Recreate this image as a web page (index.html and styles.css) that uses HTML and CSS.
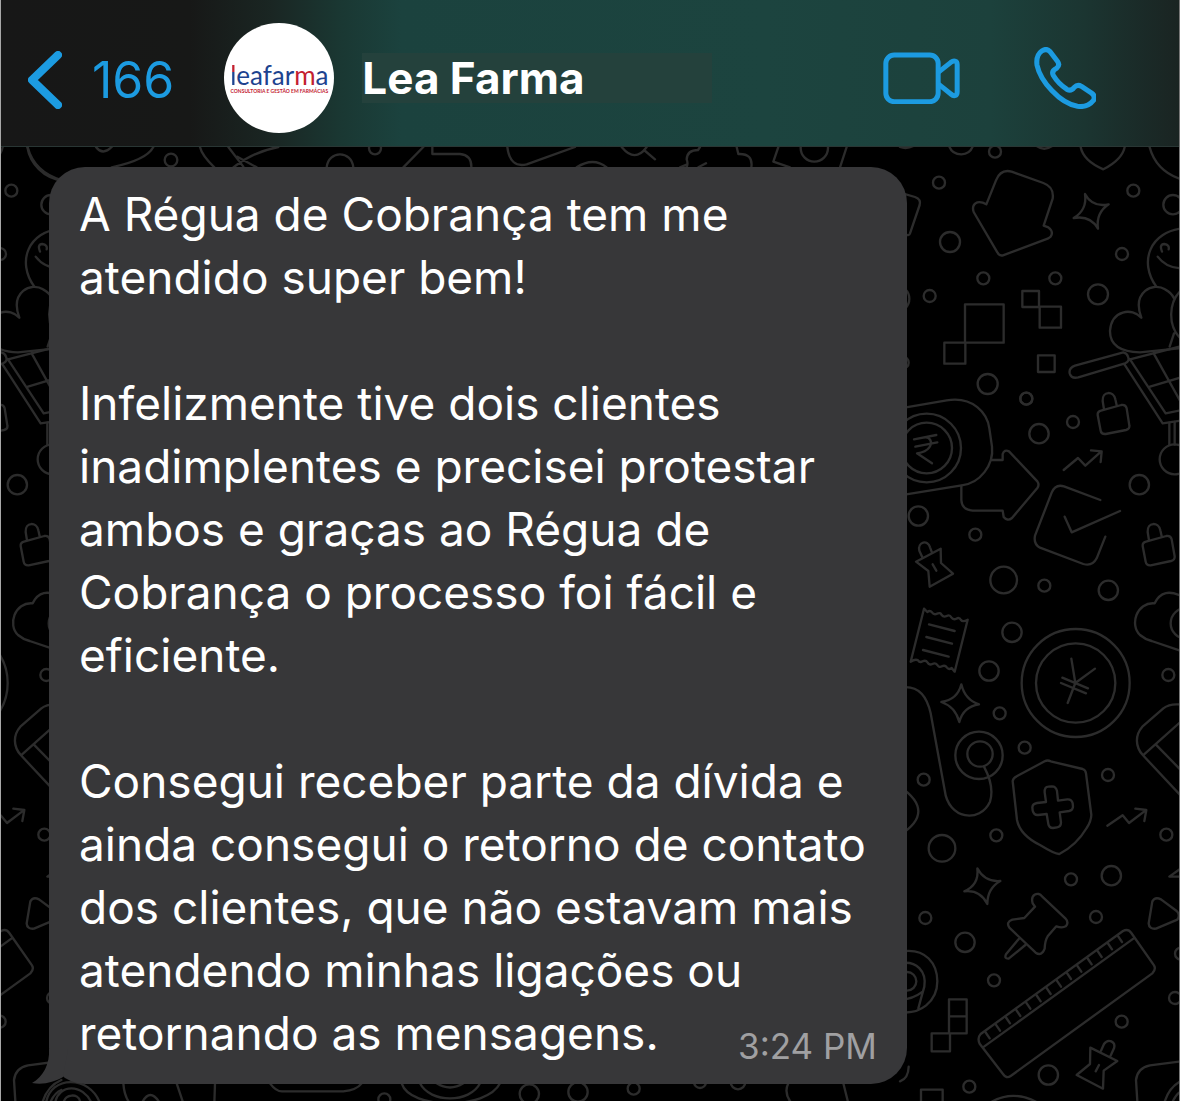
FILE: index.html
```html
<!DOCTYPE html>
<html lang="pt-BR">
<head>
<meta charset="UTF-8">
<meta name="viewport" content="width=device-width, initial-scale=1.0">
<title>Lea Farma</title>
<link rel="stylesheet" href="styles.css">
</head>
<body>
<header class="topbar">
    <button class="back" type="button">
        <svg class="chevron" viewBox="0 0 34 58" aria-hidden="true"><path d="M30 4 L4 29 L30 54"/></svg>
        <span>166</span>
    </button>
    <div class="avatar">
        <span class="logo"><b>l</b>eafar<i>m</i>a</span>
        <span class="tagline">CONSULTORIA E GESTÃO EM FARMÁCIAS</span>
    </div>
    <h1 class="name">Lea Farma</h1>
    <div class="actions">
        <button type="button" aria-label="Chamada de vídeo">
            <svg class="video" viewBox="190 152 230 156" aria-hidden="true">
                <rect x="198" y="161" width="157" height="140" rx="25"/>
                <path d="M358 211 L393 183 Q401 177 407 180 Q412 182 412 190 V271 Q412 280 407 282 Q401 285 393 278 L358 250"/>
            </svg>
        </button>
        <button type="button" aria-label="Chamada de voz">
            <svg class="phone" viewBox="644 139 184 184" aria-hidden="true">
                <path d="M667 151 Q681 141 692 153 L714 182 Q722 193 711 202 Q695 210 701 223 Q716 248 742 265 Q754 271 763 259 Q773 249 785 256 L814 275 Q828 285 820 298 Q804 319 773 315 C720 306 663 240 653 193 Q649 164 667 151Z"/>
            </svg>
        </button>
    </div>
</header>

<main class="chat">
    <svg class="wallpaper" viewBox="0 441 3540 2862" preserveAspectRatio="xMidYMin slice" aria-hidden="true">
        <g id="tile">
            <!-- house, star, smiley, heart, cart -->
            <g transform="translate(2700 420)">
                <path d="M146 14 Q154 43 184 43 Q212 42 220 14 M405 14 Q432 38 462 14 M0 21 Q20 28 40 18"/>
                <circle cx="285" cy="35" r="18"/>
                <path d="M541 14 Q545 60 610 88 Q672 56 675 14 M747 14 Q765 95 850 120"/>
                <circle cx="117" cy="128" r="18"/>
                <circle cx="700" cy="152" r="18"/>
                <circle cx="819" cy="194" r="29"/>
                <circle cx="150" cy="306" r="30"/>
                <circle cx="666" cy="342" r="18"/>
                <circle cx="250" cy="415" r="18"/>
                <circle cx="466" cy="415" r="18"/>
                <circle cx="89" cy="468" r="18"/>
                <circle cx="594" cy="463" r="30"/>
                <circle cx="263" cy="732" r="30"/>
                <circle cx="379" cy="776" r="18"/>
                <path d="M10 161 L45 171 Q64 178 59 195 L30 280 Q27 288 18 284"/>
                <path d="M288 121 Q302 86 335 95 L430 129 Q463 141 458 176 L431 257 L445 262 Q462 275 452 290 L445 295 L309 346 Q298 349 292 337 L221 216 Q214 194 232 187 Q244 184 259 193Z"/>
                <path d="M555 162 Q577 203 626 193 Q587 219 594 266 Q571 225 521 234 Q562 210 555 162Z"/>
                <path d="M850 265 C750 275 715 365 769 440 M786 335 Q777 313 793 312 Q809 314 806 328 M773 350 Q800 386 850 385"/>
                <path d="M724 533 C695 455 760 425 795 448 Q815 458 822 475 M724 533 C696 502 635 510 630 572 C629 625 680 636 720 637 L836 625 M850 445 C805 480 798 560 850 603 M822 580 L809 620"/>
                <path d="M195 493 h116 v115 h-116z M133 608 h63 v63 h-63z M367 453 h50 v48 h-50z M419 500 h64 v63 h-64z M414 646 h50 v50 h-50z"/>
                <path d="M670 637 L525 677 Q506 684 509 700 Q514 717 535 712 L675 670 Q690 665 684 650 Q681 640 670 637 M690 658 L850 617 M672 671 L788 850 L870 838 M690 658 L797 820 L870 805 M761 640 L850 800 M750 740 L850 710"/>
                <path d="M808 848 V914 M824 846 V914"/>
                <circle cx="824" cy="958" r="45"/>
                <circle cx="-12" cy="476" r="40"/>
                <circle cx="8" cy="668" r="18"/>
            </g>
            <!-- rupee coin, arrow, checkbox, locks -->
            <g transform="translate(2700 1140)">
                <circle cx="379" cy="56" r="18"/>
                <circle cx="519" cy="126" r="18"/>
                <circle cx="417" cy="161" r="29"/>
                <circle cx="718" cy="314" r="29"/>
                <circle cx="55" cy="408" r="29"/>
                <circle cx="226" cy="464" r="18"/>
                <circle cx="311" cy="600" r="40"/>
                <circle cx="433" cy="617" r="18"/>
                <circle cx="625" cy="631" r="29"/>
                <path d="M0 85 L140 61 C220 48 262 100 268 145 L276 200 C282 255 240 310 185 316 L0 346"/>
                <circle cx="80" cy="204" r="76"/>
                <circle cx="80" cy="204" r="103"/>
                <path d="M42 178 L109 165 M46 200 L112 187 M70 173 C92 168 98 188 88 202 Q78 216 51 220 L96 250"/>
                <path d="M274 240 H308 V222 Q313 207 327 214 L412 304 Q419 314 412 324 L336 414 Q322 425 311 411 L308 392 H218 Q185 389 184 360 V318"/>
                <path d="M491 270 L534 234 L556 257 L603 215 M573 211 L605 214 L602 246"/>
                <path d="M601 360 L492 319 Q466 311 455 338 L405 467 Q400 492 420 503 L550 552 Q577 560 590 535 L616 470 M494 410 L515 457 L660 393"/>
                <path d="M603 92 L664 75 Q677 73 680 85 L688 136 Q690 147 678 150 L617 162 Q604 163 602 152 L593 105 Q592 95 603 92 M612 88 L608 63 C606 32 641 32 646 58 L650 76"/>
                <path d="M738 485 L799 468 Q812 466 815 478 L824 529 Q825 540 813 543 L752 556 Q739 557 737 545 L728 498 Q727 488 738 485 M747 481 L743 456 C741 425 776 425 781 451 L785 469"/>
                <path d="M48 545 L122 506 L123 549 L159 581 L89 620 L85 573Z M67 532 L58 512 C52 485 84 478 90 502 L96 518 M98 553 L109 572"/>
                <path d="M850 651 Q788 618 764 670 C710 665 688 735 720 765 Q735 778 755 783 L850 815"/>
            </g>
            <!-- receipt, yen coin, shield, cable -->
            <g transform="translate(2700 1770)">
                <circle cx="336" cy="127" r="29"/>
                <circle cx="267" cy="243" r="29"/>
                <circle cx="805" cy="255" r="18"/>
                <circle cx="299" cy="370" r="18"/>
                <circle cx="374" cy="473" r="18"/>
                <circle cx="624" cy="555" r="18"/>
                <circle cx="71" cy="569" r="18"/>
                <circle cx="289" cy="736" r="18"/>
                <circle cx="799" cy="734" r="18"/>
                <circle cx="126" cy="775" r="40"/>
                <path d="M72 56 l10 10 q8 -6 14 1 q6 9 15 4 q10 -5 14 4 q6 8 15 3 q9 -5 14 4 q6 9 15 4 q9 -5 14 4 q5 7 20 -1 L164 245 l-9 -11 q-9 6 -14 -1 q-6 -9 -15 -4 q-9 5 -14 -4 q-6 -8 -15 -3 q-9 5 -14 -4 q-6 -9 -15 -4 q-9 5 -14 -3 q-8 -5 -22 4Z M87 103 L164 123 M79 141 L156 161 M69 180 L146 200"/>
                <circle cx="527" cy="279" r="162"/>
                <circle cx="527" cy="279" r="119"/>
                <path d="M514 206 L526 279 L585 236 M526 279 L503 339 M487 263 L564 295 M483 279 L558 310"/>
                <path d="M184 283 Q195 330 237 343 Q190 350 178 396 Q166 350 124 336 Q172 330 184 283Z"/>
                <circle cx="240" cy="492" r="38"/>
                <circle cx="237" cy="496" r="71"/>
                <path d="M0 293 Q72 280 92 370 L134 600 C145 690 240 700 270 635 Q284 590 252 530"/>
                <path d="M0 590 Q110 665 0 735"/>
                <path d="M434 514 Q443 509 452 514 L548 537 Q557 540 558 550 L574 675 Q573 695 560 714 Q530 765 478 792 Q466 793 420 765 Q360 735 351 690 L338 573 Q340 563 350 559Z"/>
                <path d="M434 607 Q433 590 445 590 L456 589 Q468 589 471 603 L474 632 L502 628 Q515 627 518 640 L519 649 Q519 661 507 663 L479 667 L483 697 Q483 711 471 712 L459 714 Q447 714 445 702 L440 672 L414 675 Q402 676 398 662 L397 652 Q398 641 411 639 L438 636Z"/>
                <path d="M622 707 L668 676 L687 699 L737 661 M706 656 L739 660 L733 693"/>
                <path d="M850 345 Q812 338 790 355 L727 410 C705 435 705 470 729 496 L850 625 M729 496 L850 388 M767 463 L850 548"/>
                <circle cx="858" cy="100" r="46"/>
            </g>
            <!-- pins, ruler, squares -->
            <g transform="translate(2700 2520)">
                <circle cx="513" cy="118" r="18"/>
                <circle cx="634" cy="107" r="29"/>
                <circle cx="76" cy="234" r="18"/>
                <circle cx="588" cy="231" r="18"/>
                <circle cx="195" cy="307" r="29"/>
                <circle cx="282" cy="421" r="18"/>
                <circle cx="843" cy="341" r="18"/>
                <circle cx="825" cy="474" r="18"/>
                <circle cx="665" cy="545" r="18"/>
                <circle cx="445" cy="705" r="29"/>
                <circle cx="208" cy="740" r="18"/>
                <path d="M232 85 Q254 127 301 123 Q262 145 262 192 Q240 148 193 154 Q238 134 232 85Z"/>
                <path d="M398 190 C390 162 415 154 426 169 L496 235 Q508 248 497 259 Q487 265 469 259 L443 289 Q435 301 434 326 Q425 350 407 338 L328 263 Q317 246 337 239 L373 234 L405 200Z M357 296 L318 343 Q312 357 326 356 L376 315"/>
                <path d="M242 582 L669 273 Q684 265 694 279 L762 376 Q769 388 757 400 L332 708 Q319 717 309 702 L239 611 Q231 594 242 582Z M252 620 L700 296"/>
                <path d="M256 576 l13 19 M287 553 l13 19 M317 531 l13 19 M348 509 l13 19 M378 487 l13 19 M409 465 l13 19 M439 443 l13 19 M470 421 l13 19 M500 398 l13 19 M531 376 l13 19 M562 354 l13 19 M592 332 l13 19 M623 309 l13 19 M653 287 l13 19"/>
                <path d="M757 184 Q765 169 783 178 L830 213 Q842 225 832 239 L768 266 Q747 268 746 250Z M850 80 L808 110 H850"/>
                <path d="M147 478 h53 v102 h-53z M147 529 h53 M95 580 h55 v54 h-55z M63 800 v-51 h65 v51"/>
                <circle cx="21" cy="424" r="28"/>
                <path d="M0 370 C50 360 80 395 73 440 Q63 475 55 505 M0 480 Q38 478 68 455 M0 335 C80 320 112 375 112 424 C112 485 60 525 0 516"/>
                <path d="M0 724 Q25 715 26 680 M275 785 Q340 750 408 785"/>
                <path d="M571 623 L652 663 L611 692 L609 746 L530 705 L570 672Z M603 632 L612 612 C625 594 648 605 642 625 L631 649 M597 675 L587 694"/>
                <path d="M850 663 L750 676 Q712 684 708 720 L713 800 M790 800 Q803 740 850 720 M812 800 Q825 760 850 750"/>
            </g>
        </g>
        <use href="#tile" x="-3366"/>
        <!-- strip above the bubble -->
        <path d="M82 441 C90 490 130 535 190 542 M288 441 Q308 468 335 441 M460 441 Q440 480 335 502 M600 441 Q605 465 643 502 M685 441 L730 500 M835 441 Q760 455 700 502 M712 470 L770 502"/>
        <circle cx="513" cy="480" r="19"/>
        <circle cx="1125" cy="445" r="18"/>
        <path d="M980 502 C985 450 1055 450 1060 502 M1270 441 L1210 502 M1297 441 V462 H1380 Q1415 465 1414 502 M1522 441 Q1530 505 1580 493 L1725 441 M1730 502 Q1780 470 1820 502 M1865 441 Q1905 490 1940 441 M1932 450 L1965 478 M2100 441 L2094 450 Q2062 450 2060 478 Q2065 490 2060 502 M2040 502 L2060 494 M2095 502 L2118 490 M2210 441 L2215 462 Q2260 460 2254 502 M2335 441 L2320 485 L2370 502 M2540 441 L2520 502"/>
        <circle cx="2443" cy="444" r="41"/>
        <!-- strip under the bubble -->
        <path d="M370 3250 Q373 3290 390 3310 M425 3310 Q450 3260 480 3310 M530 3250 L550 3310 M645 3250 L643 3310 M810 3250 Q830 3277 850 3274 H1030 Q1070 3270 1085 3250 M1205 3250 C1230 3330 1460 3330 1500 3250 M1260 3250 C1290 3310 1410 3310 1440 3250 M1310 3250 Q1350 3275 1390 3250 M2365 3250 Q2350 3280 2375 3310 M2530 3250 L2545 3310"/>
        <path d="M138 3310 C150 3225 270 3225 300 3310 M165 3310 C175 3250 250 3250 275 3310 M190 3310 C195 3280 235 3280 240 3303"/>
        <circle cx="1153" cy="3298" r="18"/>
        <circle cx="1588" cy="3282" r="29"/>
        <circle cx="1734" cy="3276" r="29"/>
        <circle cx="1901" cy="3266" r="18"/>
        <circle cx="2100" cy="3246" r="18"/>
        <circle cx="2214" cy="3246" r="22"/>
    </svg>

    <article class="bubble">
        <p>A Régua de Cobrança tem me atendido super bem!</p>
        <p>Infelizmente tive dois clientes inadimplentes e precisei protestar ambos e graças ao Régua de Cobrança o processo foi fácil e eficiente.</p>
        <p>Consegui receber parte da dívida e ainda consegui o retorno de contato dos clientes, que não estavam mais atendendo minhas ligações ou retornando as mensagens. <time class="time" datetime="15:24">3:24 PM</time></p>
        <svg class="tail" viewBox="0 0 36 36" aria-hidden="true"><path d="M17 0 C18 15 11 28 0 34 C12 36 22 33 31 28 L36 0Z"/></svg>
    </article>
</main>
</body>
</html>
```
FILE: styles.css
```css
* {
    box-sizing: border-box;
}

body {
    margin: 0;
    min-height: 100vh;
    display: flex;
    flex-direction: column;
    font-family: Inter, "Liberation Sans", sans-serif;
    color: #fff;
    background-color: #000;
    border-left: 1px solid #a8a8a8;
    border-right: 1px solid #777;
}

button {
    display: flex;
    align-items: center;
    padding: 0;
    border: 0;
    background: none;
    color: #1c9be1;
    font: inherit;
    cursor: pointer;
}

svg {
    display: block;
    fill: none;
    stroke: #1c9be1;
    stroke-linecap: round;
    stroke-linejoin: round;
}

.topbar {
    display: flex;
    align-items: center;
    padding: 23px 83px 13px 27px;
    background: linear-gradient(90deg, #171717 0%, #171817 16%, #1a2623 23%, #1a3833 29%, #1b423e 34%, #1c443f 65%, #1c413c 84%, #1b3531 92%, #1a2422 100%);
    border-bottom: 1px solid #293634;
}

.topbar .back {
    gap: 30px;
    padding-top: 3px;
    font-size: 50px;
    line-height: 60px;
}

.chevron {
    width: 34px;
    height: 58px;
    stroke-width: 8;
}

.avatar {
    display: flex;
    flex-direction: column;
    align-items: center;
    justify-content: center;
    width: 110px;
    height: 110px;
    margin-left: 50px;
    border-radius: 50%;
    background-color: #fff;
    white-space: nowrap;
}

.logo {
    font-family: Lato, sans-serif;
    font-size: 26px;
    line-height: 26px;
    color: #1d438f;
}

.logo b {
    font-weight: normal;
    color: transparent;
    background: linear-gradient(#c3202f 40%, #1d438f 40%);
    -webkit-background-clip: text;
    background-clip: text;
}

.logo i {
    font-style: normal;
    color: #c3202f;
}

.tagline {
    font-family: Lato, sans-serif;
    font-size: 5px;
    font-weight: bold;
    line-height: 6px;
    color: #c3202f;
}

.name {
    width: 350px;
    margin: 0 0 0 28px;
    background-color: #24413c;
    font-size: 44px;
    font-weight: 700;
    line-height: 50px;
}

.actions {
    display: flex;
    gap: 74px;
    margin-left: auto;
}

.video {
    width: 77px;
    height: 52px;
    stroke-width: 15;
}

.phone {
    width: 62px;
    height: 62px;
    stroke-width: 15;
}

.chat {
    position: relative;
    flex: 1;
    padding: 20px 48px 16px;
    overflow: hidden;
}

.wallpaper {
    position: absolute;
    top: 0;
    left: -1px;
    width: calc(100% + 2px);
    height: 100%;
    stroke: #2c2c2c;
    stroke-width: 7;
}

.bubble {
    position: relative;
    max-width: 858px;
    padding: 16px 30px 19px;
    border-radius: 36px;
    background-color: #373739;
    font-size: 46px;
    line-height: 63px;
}

.bubble p {
    margin: 0 0 63px;
}

.bubble p:last-of-type {
    margin-bottom: 0;
}

.time {
    float: right;
    margin-top: 23px;
    font-size: 35px;
    line-height: 42px;
    color: #a0a0a2;
}

.tail {
    position: absolute;
    left: -17px;
    bottom: -1px;
    width: 36px;
    height: 36px;
    fill: #373739;
    stroke: none;
}
```
